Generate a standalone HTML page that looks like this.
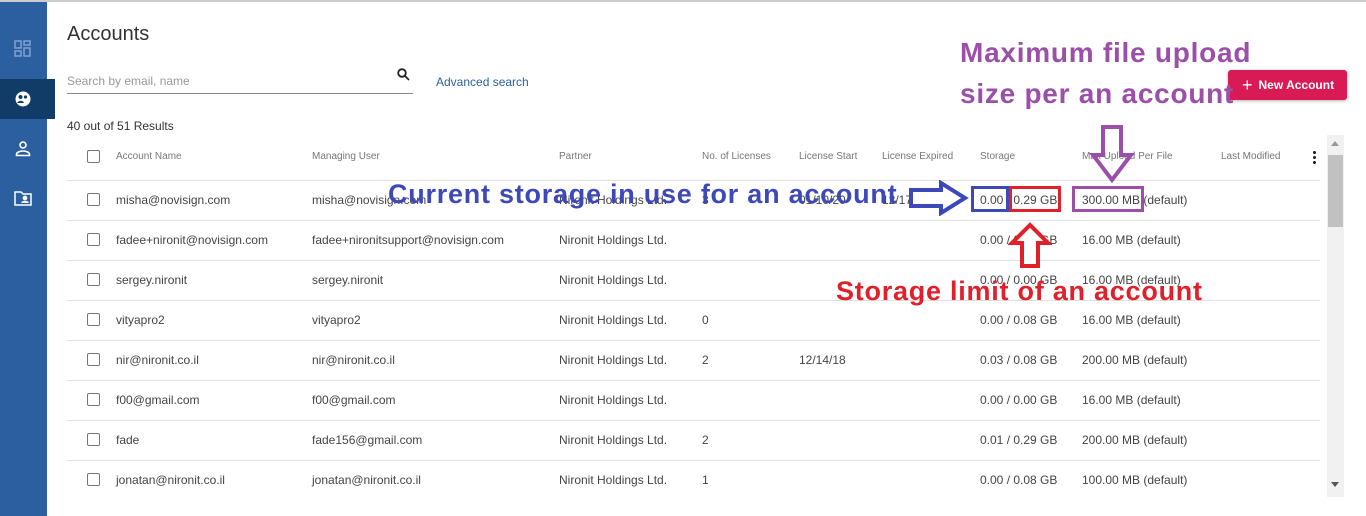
<!DOCTYPE html>
<html><head><meta charset="utf-8"><style>
*{margin:0;padding:0;box-sizing:border-box}
body{width:1366px;height:516px;overflow:hidden;background:#fff;font-family:"Liberation Sans",sans-serif;position:relative;color:#333}
.abs{position:absolute}
.side{left:0;top:0;width:47px;height:516px;background:#2b5f9f}
.topline{left:0;top:0;width:1366px;height:2px;background:#ccc}
.active{left:0;top:79px;width:55px;height:40px;background:#123c68}
.t{position:absolute;font-size:12px;color:#444;white-space:nowrap}
.h{position:absolute;font-size:10px;color:#777;white-space:nowrap}
.cb{position:absolute;left:87px;width:13px;height:13px;border:1px solid #777;border-radius:2px}
.line{position:absolute;left:67px;width:1253px;height:1px;background:#e0e0e0}
.ann{position:absolute;font-weight:bold;white-space:nowrap;font-family:"Liberation Sans",sans-serif}
</style></head><body>
<div class="abs side"></div>
<div class="abs topline"></div>
<div class="abs active"></div>
<svg class="abs" style="left:14px;top:40px" width="18" height="18" viewBox="0 0 18 18" fill="none" stroke="#7fa3d0" stroke-width="1.5"><rect x="1" y="1" width="6" height="7"/><rect x="10" y="1" width="6" height="4"/><rect x="1" y="11" width="6" height="5"/><rect x="10" y="8" width="6" height="8"/></svg>
<svg class="abs" style="left:14px;top:90px" width="18" height="18" viewBox="0 0 18 18"><circle cx="9" cy="9" r="7.5" fill="#fff"/><circle cx="6.5" cy="7" r="2" fill="#123c68"/><circle cx="11.5" cy="7" r="1.6" fill="#123c68"/><path d="M3 13c2-3 6-3 7 0" fill="#123c68"/></svg>
<svg class="abs" style="left:15px;top:140px" width="16" height="17" viewBox="0 0 16 17" fill="none" stroke="#fff" stroke-width="1.6"><circle cx="8" cy="5" r="3"/><path d="M1.5 15.5v-1c0-2 3-3.5 6.5-3.5s6.5 1.5 6.5 3.5v1z"/></svg>
<svg class="abs" style="left:14px;top:190px" width="18" height="16" viewBox="0 0 18 16" fill="none" stroke="#fff" stroke-width="1.5"><path d="M1 2h6l2 2h8v11H1z"/><circle cx="11" cy="8" r="1.6" fill="#fff"/><path d="M8 13c0-2 6-2 6 0" fill="#fff"/></svg>

<div class="t" style="left:67px;top:23px;font-size:20px;color:#333">Accounts</div>
<div class="t" style="left:67px;top:74px;font-size:12px;color:#999">Search by email, name</div>
<div class="abs" style="left:67px;top:93px;width:346px;height:1px;background:#888"></div>
<svg class="abs" style="left:397px;top:68px" width="13" height="13" viewBox="0 0 13 13" fill="none" stroke="#222" stroke-width="1.8"><circle cx="5" cy="5" r="3.8"/><path d="M8 8l4 4"/></svg>
<div class="t" style="left:436px;top:75px;color:#2b5f9f">Advanced search</div>
<div class="t" style="left:67px;top:119px;color:#333">40 out of 51 Results</div>

<div class="abs" style="left:1228px;top:70px;width:119px;height:30px;background:#d81b55;border-radius:3px;box-shadow:0 1px 3px rgba(0,0,0,.3);color:#fff;font-size:12px;font-weight:bold;line-height:30px;padding-left:14px"><span style="font-size:18px;font-weight:normal;vertical-align:-2px;margin-right:6px">+</span>New Account</div>

<div class="cb" style="top:150px"></div>
<div class="h" style="left:116px;top:151px">Account Name</div>
<div class="h" style="left:312px;top:151px">Managing User</div>
<div class="h" style="left:559px;top:151px">Partner</div>
<div class="h" style="left:702px;top:151px">No. of Licenses</div>
<div class="h" style="left:799px;top:151px">License Start</div>
<div class="h" style="left:882px;top:151px">License Expired</div>
<div class="h" style="left:980px;top:151px">Storage</div>
<div class="h" style="left:1082px;top:151px">Max Upload Per File</div>
<div class="h" style="left:1221px;top:151px">Last Modified</div>
<div class="abs" style="left:1313px;top:150px;width:3px;height:14px;background:radial-gradient(circle,#222 1.4px,transparent 1.6px) 0 0/3px 5px"></div>
<div class="abs" style="left:1327px;top:135px;width:17px;height:362px;background:#f1f1f1"></div>
<div class="abs" style="left:1328px;top:155px;width:15px;height:72px;background:#c1c1c1"></div>
<div class="abs" style="left:1331px;top:141px;width:0;height:0;border-left:4px solid transparent;border-right:4px solid transparent;border-bottom:5px solid #999"></div>
<div class="abs" style="left:1331px;top:482px;width:0;height:0;border-left:4px solid transparent;border-right:4px solid transparent;border-top:5px solid #555"></div>

<div class="line" style="top:180px"></div>
<div class="line" style="top:220px"></div>
<div class="line" style="top:260px"></div>
<div class="line" style="top:300px"></div>
<div class="line" style="top:340px"></div>
<div class="line" style="top:380px"></div>
<div class="line" style="top:420px"></div>
<div class="line" style="top:460px"></div>

<div class="cb" style="top:193px"></div><div class="t" style="left:116px;top:193px">misha@novisign.com</div><div class="t" style="left:312px;top:193px">misha@novisign.com</div><div class="t" style="left:559px;top:193px">Nironit Holdings Ltd.</div><div class="t" style="left:702px;top:193px">3</div><div class="t" style="left:799px;top:193px">01/10/20</div><div class="t" style="left:882px;top:193px">12/17/21</div><div class="t" style="left:980px;top:193px">0.00 / 0.29 GB</div><div class="t" style="left:1082px;top:193px">300.00 MB (default)</div>
<div class="cb" style="top:233px"></div><div class="t" style="left:116px;top:233px">fadee+nironit@novisign.com</div><div class="t" style="left:312px;top:233px">fadee+nironitsupport@novisign.com</div><div class="t" style="left:559px;top:233px">Nironit Holdings Ltd.</div><div class="t" style="left:980px;top:233px">0.00 / 0.00 GB</div><div class="t" style="left:1082px;top:233px">16.00 MB (default)</div>
<div class="cb" style="top:273px"></div><div class="t" style="left:116px;top:273px">sergey.nironit</div><div class="t" style="left:312px;top:273px">sergey.nironit</div><div class="t" style="left:559px;top:273px">Nironit Holdings Ltd.</div><div class="t" style="left:980px;top:273px">0.00 / 0.00 GB</div><div class="t" style="left:1082px;top:273px">16.00 MB (default)</div>
<div class="cb" style="top:313px"></div><div class="t" style="left:116px;top:313px">vityapro2</div><div class="t" style="left:312px;top:313px">vityapro2</div><div class="t" style="left:559px;top:313px">Nironit Holdings Ltd.</div><div class="t" style="left:702px;top:313px">0</div><div class="t" style="left:980px;top:313px">0.00 / 0.08 GB</div><div class="t" style="left:1082px;top:313px">16.00 MB (default)</div>
<div class="cb" style="top:353px"></div><div class="t" style="left:116px;top:353px">nir@nironit.co.il</div><div class="t" style="left:312px;top:353px">nir@nironit.co.il</div><div class="t" style="left:559px;top:353px">Nironit Holdings Ltd.</div><div class="t" style="left:702px;top:353px">2</div><div class="t" style="left:799px;top:353px">12/14/18</div><div class="t" style="left:980px;top:353px">0.03 / 0.08 GB</div><div class="t" style="left:1082px;top:353px">200.00 MB (default)</div>
<div class="cb" style="top:393px"></div><div class="t" style="left:116px;top:393px">f00@gmail.com</div><div class="t" style="left:312px;top:393px">f00@gmail.com</div><div class="t" style="left:559px;top:393px">Nironit Holdings Ltd.</div><div class="t" style="left:980px;top:393px">0.00 / 0.00 GB</div><div class="t" style="left:1082px;top:393px">16.00 MB (default)</div>
<div class="cb" style="top:433px"></div><div class="t" style="left:116px;top:433px">fade</div><div class="t" style="left:312px;top:433px">fade156@gmail.com</div><div class="t" style="left:559px;top:433px">Nironit Holdings Ltd.</div><div class="t" style="left:702px;top:433px">2</div><div class="t" style="left:980px;top:433px">0.01 / 0.29 GB</div><div class="t" style="left:1082px;top:433px">200.00 MB (default)</div>
<div class="cb" style="top:473px"></div><div class="t" style="left:116px;top:473px">jonatan@nironit.co.il</div><div class="t" style="left:312px;top:473px">jonatan@nironit.co.il</div><div class="t" style="left:559px;top:473px">Nironit Holdings Ltd.</div><div class="t" style="left:702px;top:473px">1</div><div class="t" style="left:980px;top:473px">0.00 / 0.08 GB</div><div class="t" style="left:1082px;top:473px">100.00 MB (default)</div>

<!-- annotations -->
<div class="ann" style="left:388px;top:179px;font-size:27px;letter-spacing:0.75px;color:#3d49b8">Current storage in use for an account</div>
<div class="ann" style="left:960px;top:37px;font-size:28px;letter-spacing:0.75px;color:#9b4fa8">Maximum file upload</div>
<div class="ann" style="left:960px;top:78px;font-size:28px;letter-spacing:0.75px;color:#9b4fa8">size per an account</div>
<div class="ann" style="left:836px;top:276px;font-size:27px;letter-spacing:0.75px;color:#e0202a">Storage limit of an account</div>
<div class="abs" style="left:971px;top:186px;width:38px;height:26px;border:3px solid #3d49b8"></div>
<div class="abs" style="left:1009px;top:186px;width:52px;height:26px;border:3px solid #e0202a"></div>
<div class="abs" style="left:1072px;top:186px;width:72px;height:26px;border:3px solid #9b4fa8"></div>
<svg class="abs" style="left:908px;top:180px" width="62" height="36"><path d="M3 10h30V3l24 15-24 15v-7H3z" fill="#fff" stroke="#3d49b8" stroke-width="4"/></svg>
<svg class="abs" style="left:1008px;top:221px" width="44" height="48"><path d="M14 45V22H4L22 4l18 18H30v23z" fill="#fff" stroke="#e0202a" stroke-width="4"/></svg>
<svg class="abs" style="left:1089px;top:124px" width="46" height="60"><path d="M14 3h18v28h10L23 56 4 31h10z" fill="none" stroke="#9b4fa8" stroke-width="4"/></svg>
</body></html>
